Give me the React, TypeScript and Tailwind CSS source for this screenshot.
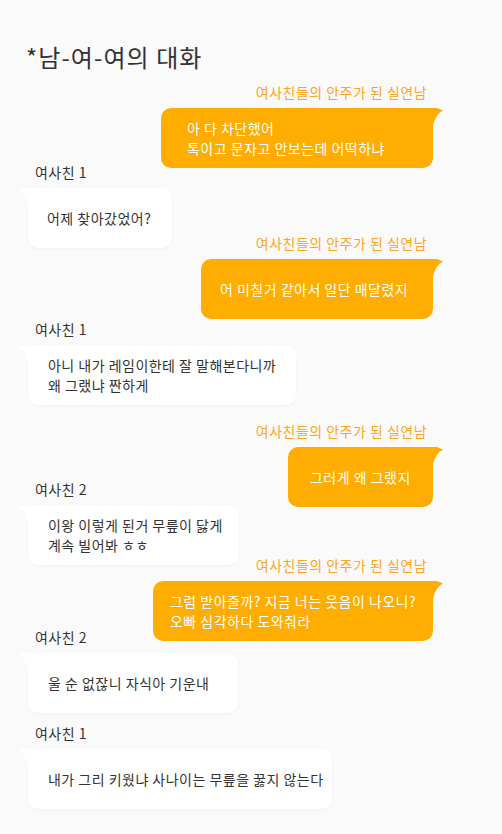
import React from "react";

type Msg = {
    side: "l" | "r";
    name: string;
    lines: string[];
    w: string;
    pl: string;
    mt: string;
};

const ME = "여사친들의 안주가 된 실연남";

const msgs: Msg[] = [
    { side: "r", name: ME, lines: ["아 다 차단했어", "톡이고 문자고 안보는데 어떡하냐"], w: "w-[272px]", pl: "pl-[26px]", mt: "mt-[9px]" },
    { side: "l", name: "여사친 1", lines: ["어제 찾아갔었어?"], w: "w-[144px]", pl: "pl-[19px]", mt: "-mt-[6px]" },
    { side: "r", name: ME, lines: ["어 미칠거 같아서 일단 매달렸지"], w: "w-[232px]", pl: "pl-[19px]", mt: "-mt-[15px]" },
    { side: "l", name: "여사친 1", lines: ["아니 내가 레임이한테 잘 말해본다니까", "왜 그랬냐 짠하게"], w: "w-[268px]", pl: "pl-[20px]", mt: "mt-0" },
    { side: "r", name: ME, lines: ["그러게 왜 그랬지"], w: "w-[145px]", pl: "pl-[22px]", mt: "mt-[16px]" },
    { side: "l", name: "여사친 2", lines: ["이왕 이렇게 된거 무릎이 닳게", "계속 빌어봐 ㅎㅎ"], w: "w-[211px]", pl: "pl-[20px]", mt: "-mt-[28px]" },
    { side: "r", name: ME, lines: ["그럼 받아줄까? 지금 너는 웃음이 나오니?", "오빠 심각하다 도와줘라"], w: "w-[280px]", pl: "pl-[17px]", mt: "-mt-[10px]" },
    { side: "l", name: "여사친 2", lines: ["울 순 없잖니 자식아 기운내"], w: "w-[210px]", pl: "pl-[20px]", mt: "-mt-[14px]" },
    { side: "l", name: "여사친 1", lines: ["내가 그리 키웠냐 사나이는 무릎을 꿇지 않는다"], w: "w-[304px]", pl: "pl-[20px]", mt: "mt-[10px]" },
];

const Bubble = ({ m }: { m: Msg }) => {
    const right = m.side === "r";
    return (
        <div className={`${m.mt} flex flex-col ${right ? "items-end pr-[69px]" : "items-start pl-[28px]"}`}>
            <div
                className={`h-5 text-[14px] leading-5 whitespace-nowrap ${
                    right ? "pr-[6px] text-[#ffa51c]" : "pl-[7px] text-[#333]"
                }`}
            >
                {m.name}
            </div>
            <div
                className={`relative mt-[6px] h-[60px] ${m.w} ${m.pl} flex flex-col justify-center rounded-[10px] text-[14px] leading-5 whitespace-nowrap ${
                    right ? "bg-[#ffad00] text-white" : "bg-white text-[#333] shadow-[0_1px_3px_rgba(0,0,0,0.04)]"
                }`}
            >
                {right ? (
                    <svg className="absolute top-0 right-[-10px]" width="20" height="17" viewBox="0 0 20 17">
                        <path d="M0 0 L14 0 Q17 1 20 2.5 Q13 6 10 17 L0 17 Z" fill="#ffad00" />
                    </svg>
                ) : (
                    <svg className="absolute top-0 left-[-10px]" width="20" height="18" viewBox="0 0 20 18">
                        <path d="M20 0 L6 0 Q3 0.5 0 1 Q8 5 10 18 L20 18 Z" fill="#ffffff" />
                    </svg>
                )}
                {m.lines.map((l, i) => (
                    <div key={i} className="relative">
                        {l}
                    </div>
                ))}
            </div>
        </div>
    );
};

export default function App() {
    return (
        <div className="min-h-[834px] w-full bg-[#fafafa] pt-[41px] pb-6 tracking-[0.03em] font-['Noto_Sans_CJK_KR',sans-serif]">
            <h1 className="pl-[26px] text-[24px] leading-[32px] tracking-[0.045em] text-[#333]">*남-여-여의 대화</h1>
            <div className="flex flex-col">
                {msgs.map((m, i) => (
                    <Bubble key={i} m={m} />
                ))}
            </div>
        </div>
    );
}
